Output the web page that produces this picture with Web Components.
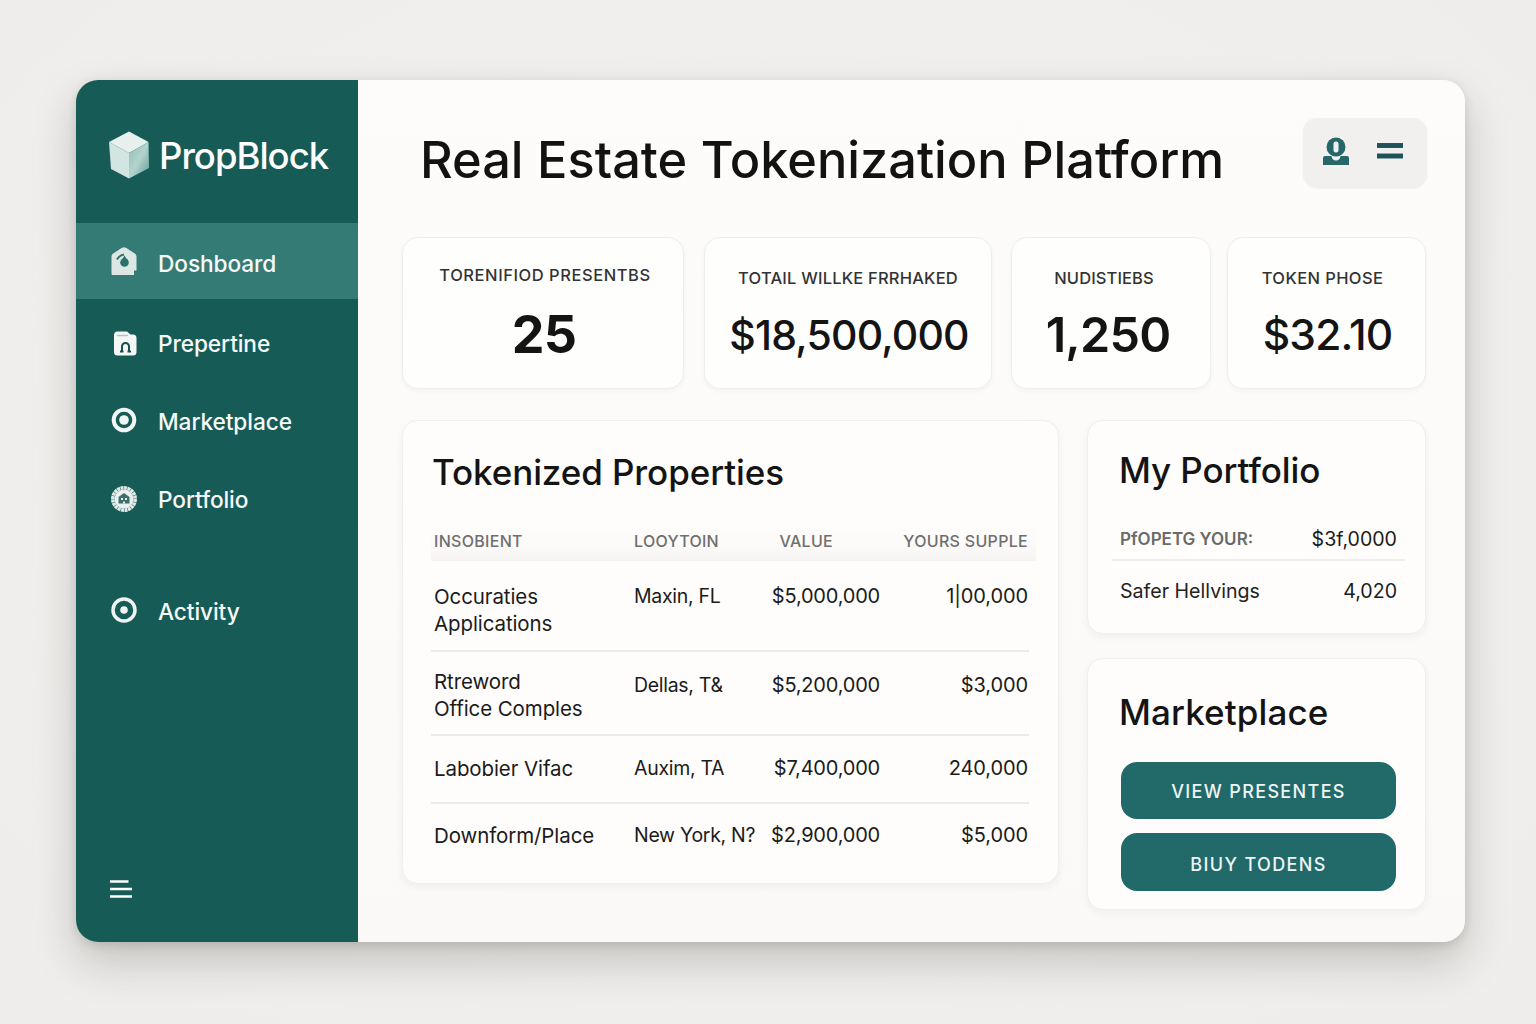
<!DOCTYPE html>
<html lang="en"><head><meta charset="utf-8"><title>PropBlock</title>
<style>
html,body{margin:0;height:100%}
body{background:radial-gradient(ellipse at 50% 45%,#f3f2f0 0%,#f0efed 60%,#eeedeb 100%);font-family:Inter,"Liberation Sans",sans-serif;color:#151515}
</style></head><body>
<app-window>
  <side-bar slot="side">
    <brand-logo>PropBlock</brand-logo>
    <nav-item active icon="dash" style="--mt:0">Doshboard</nav-item>
    <nav-item icon="prop" style="--mt:5px">Prepertine</nav-item>
    <nav-item icon="ring">Marketplace</nav-item>
    <nav-item icon="port">Portfolio</nav-item>
    <nav-item icon="ring2" style="--mt:34px">Activity</nav-item>
    <menu-glyph slot="foot"></menu-glyph>
  </side-bar>
  <top-bar>Real Estate Tokenization Platform</top-bar>
  <stat-row>
    <stat-card style="--w:282px;--vs:52px;--vw:700;--ly:-3px;--ls:.55px;--lx:2px;--vx:1px" value="25">TORENIFIOD PRESENTBS</stat-card>
    <stat-card style="--w:288px;--ml:20px;--vs:41px;--vw:500;--ls:.2px;--vx:1px" value="$18,500,000">TOTAIL WILLKE FRRHAKED</stat-card>
    <stat-card style="--w:200px;--ml:19px;--vs:48.500px;--vw:600;--lx:-7px;--vx:-3px" value="1,250">NUDISTIEBS</stat-card>
    <stat-card style="--w:199px;--ml:16px;--vs:42.500px;--vw:500;--lx:-4px;--ls:.4px;--vx:1px" value="$32.10">TOKEN PHOSE</stat-card>
  </stat-row>
  <lower-grid>
    <prop-table>
      <card-title slot="title" style="--t:29px;--l:29px;--tls:-.1px">Tokenized Properties</card-title>
      <prop-row slot="head" head><span>INSOBIENT</span><span>LOOYTOIN</span><span class="v">VALUE</span><span>YOURS SUPPLE</span></prop-row>
      <prop-row style="--h:91px;--p:22px;--o:0px"><span>Occuraties<br>Applications</span><span>Maxin, FL</span><span>$5,000,000</span><span>1|00,000</span></prop-row>
      <prop-row style="--h:84px;--p:16px;--o:4px"><span>Rtreword<br>Office Comples</span><span>Dellas, T&amp;</span><span>$5,200,000</span><span>$3,000</span></prop-row>
      <prop-row style="--h:68px;--p:19px;--o:0px"><span>Labobier Vifac</span><span>Auxim, TA</span><span>$7,400,000</span><span>240,000</span></prop-row>
      <prop-row last style="--h:65px;--p:18px;--o:0px"><span>Downform/Place</span><span>New York, N?</span><span>$2,900,000</span><span>$5,000</span></prop-row>
    </prop-table>
    <right-col>
      <info-card style="--h:214px">
        <card-title style="--t:27px;--l:31px;--tls:-.1px">My Portfolio</card-title>
        <kv-row style="--mt:27px;--h:42px" label-style="muted"><span slot="k">PfOPETG YOUR:</span>$3f,0000</kv-row>
        <kv-row last style="--mt:0;--h:60px"><span slot="k">Safer Hellvings</span>4,020</kv-row>
      </info-card>
      <info-card style="--h:252px">
        <card-title style="--t:31px;--l:31px;--tls:.1px">Marketplace</card-title>
        <teal-button style="--mt:28px;--bh:57px;--pt:2px">VIEW PRESENTES</teal-button>
        <teal-button style="--mt:14px;--bh:58px;--pt:4px">BIUY TODENS</teal-button>
      </info-card>
    </right-col>
  </lower-grid>
</app-window>
<script>
const def=(n,html)=>{customElements.define(n,class extends HTMLElement{
  constructor(){super();this.attachShadow({mode:'open'}).innerHTML=typeof html==='function'?html(this):html}
})};
const icons={
 dash:`<svg width="28" height="30" viewBox="0 0 28 30"><path d="M1.500 11 C1.500 9 2.500 8 4 7 L12 1.800 C13.300 1 14.700 1 16 1.800 L24 7 C25.500 8 26.500 9 26.500 11 V24.500 H24 V29 H3 C2 29 1.500 28.500 1.500 27.500 Z" fill="#dce7e4"/><path d="M7 13.500 C8.500 10.500 11 9 14 8.500" stroke="#2f6f6a" stroke-width="2" fill="none"/><circle cx="14.500" cy="16.500" r="4.300" fill="#2a716c"/><path d="M14.500 9.500l3 5h-6Z" fill="#2a716c"/></svg>`,
 prop:`<svg width="26" height="27" viewBox="0 0 26 27" style="margin-left:3px"><path d="M4.500 1.500H14l3.500 3H20A3.500 3.500 0 0 1 23.500 8V22A3.500 3.500 0 0 1 20 25.500H4.500A3.500 3.500 0 0 1 1 22V5A3.500 3.500 0 0 1 4.500 1.500Z" fill="#f4f7f6"/><path d="M4 5.500h11" stroke="#a9c6c1" stroke-width="1.400"/><path d="M9 21v-4.500a3.500 3.500 0 0 1 7 0V21" fill="none" stroke="#17514e" stroke-width="2"/><path d="M7 21.500h3.500M14.500 21.500h3.500" stroke="#17514e" stroke-width="1.800"/></svg>`,
 ring:`<svg width="26" height="26" viewBox="0 0 26 26" style="margin:-2px 0 0 1px"><circle cx="13" cy="13" r="10.300" fill="none" stroke="#f1f5f4" stroke-width="4"/><circle cx="13" cy="13" r="4.800" fill="#f1f5f4"/></svg>`,
 ring2:`<svg width="26" height="26" viewBox="0 0 26 26" style="margin:-2px 0 0 1px"><circle cx="13" cy="13" r="11" fill="none" stroke="#eef3f2" stroke-width="3.500"/><circle cx="13" cy="13" r="3.800" fill="#eef3f2"/></svg>`,
 port:`<svg width="28" height="28" viewBox="0 0 28 28"><circle cx="14" cy="14" r="11.200" fill="none" stroke="#dfe9e7" stroke-width="3.600" stroke-dasharray="3 .5"/><circle cx="14" cy="14" r="9.500" fill="#e9f0ee"/><path d="M8.500 12 14 8l5.500 4v6.500h-11Z" fill="#3c6f6b"/><path d="M11 13h2v2h-2ZM15 13h2v2h-2ZM13 16.500h2v2h-2Z" fill="#e9f0ee"/></svg>`
};
def('app-window',`<style>
:host{display:block;position:absolute;left:76px;top:80px;width:1389px;height:862px}
.w{display:flex;height:100%;border-radius:22px;overflow:hidden;background:#fbfaf8;box-shadow:0 20px 44px rgba(40,40,38,.22),0 3px 10px rgba(40,40,38,.14)}
.m{flex:1;min-width:0;padding:38px 38px 0 44px;box-sizing:border-box;background:linear-gradient(180deg,#fdfcfb 0%,#faf9f7 100%)}
</style><div class="w"><slot name="side"></slot><div class="m"><slot></slot></div></div>`);
def('side-bar',`<style>
:host{display:flex;flex-direction:column;width:282px;flex:none;height:100%;background:#175b57;color:#f4f8f7}
.foot{margin-top:auto;padding:0 0 44px 34px}
</style><slot></slot><div class="foot"><slot name="foot"></slot></div>`);
def('brand-logo',`<style>
:host{display:flex;align-items:center;height:143px;padding:9px 0 0 32px;box-sizing:border-box;gap:8px;font:500 36.500px Inter,sans-serif;letter-spacing:-1px;color:#fff}
svg{flex:none;margin-bottom:3px;margin-left:-1px}
</style><svg width="44" height="50" viewBox="0 0 44 50">
<defs><linearGradient id="g" x1="0" y1="0" x2="1" y2="1"><stop offset="0" stop-color="#8fbcb5"/><stop offset=".5" stop-color="#b4d3ce"/><stop offset="1" stop-color="#5f9a93"/></linearGradient></defs>
<path d="M22 1.500 41.500 12 22 23 2 12Z" fill="#e7f0ed"/>
<path d="M2 12 22 23V48.500L4 39Z" fill="#d3e5e1"/>
<path d="M22 23 41.500 12 42 38 22 48.500Z" fill="url(#g)"/>
</svg><slot></slot>`);
def('nav-item',el=>{const a=el.hasAttribute('active');return `<style>
:host{display:flex;align-items:center;box-sizing:border-box;height:${a?76:78}px;margin-top:var(--mt,0);padding:${a?'5px':'0'} 0 0 34px;${a?'background:#357b75;':''}font:500 22.700px Inter,sans-serif;letter-spacing:-.1px;color:#f6f9f8}
.i{width:48px;flex:none;display:flex;align-items:center;margin-top:${a?'-5px':'0'}}
</style><span class="i" part="i">${icons[el.getAttribute('icon')]}</span><slot></slot>`});
def('menu-glyph',`<style>:host{display:block;width:22px;height:18px}</style><svg width="22" height="18" viewBox="0 0 22 18"><path d="M0 1.500H18.500M0 9H22M0 16.500H22" stroke="#fff" stroke-width="2.400"/></svg>`);
def('top-bar',`<style>
:host{display:flex;align-items:center;height:70px;padding-left:18px;font:500 50.500px Inter,sans-serif;letter-spacing:0;color:#121212}
.t{flex:1;white-space:nowrap;position:relative;top:6px}
.a{flex:none;width:124px;height:70px;border-radius:14px;background:#f1f0ee;display:flex;align-items:center;justify-content:space-between;box-sizing:border-box;padding:0 24px 4px 19px;box-shadow:0 1px 2px rgba(0,0,0,.04)}
</style><div class="t"><slot></slot></div><div class="a">
<svg width="28" height="29" viewBox="0 0 28 29"><path d="M1 21a2 2 0 0 1 2-2h6.500a4.500 4.500 0 0 0 9 0H25a2 2 0 0 1 2 2v7H1Z" fill="#27676a"/><circle cx="14" cy="10" r="9.500" fill="#27676a"/><rect x="11.500" y="4.500" width="5" height="11" rx="2.200" fill="#f1f0ee"/></svg>
<svg width="26" height="16" viewBox="0 0 26 16"><path d="M0 2.500H26M0 13H26" stroke="#27606a" stroke-width="5"/><path d="M0 2.500H26M0 13H26" stroke="#1e5357" stroke-width="4"/></svg>
</div>`);
def('stat-row',`<style>:host{display:flex;margin-top:49px;height:152px}</style><slot></slot>`);
def('stat-card',el=>`<style>
:host{display:flex;flex-direction:column;align-items:center;box-sizing:border-box;width:var(--w);flex:none;margin-left:var(--ml,0);background:#fefefd;border:1px solid #efeeeb;border-radius:16px;box-shadow:0 2px 5px rgba(30,30,30,.04);text-align:center}
.l{margin-top:28px;height:24px;font:500 16.500px/24px Inter,sans-serif;letter-spacing:var(--ls,.1px);color:#333;white-space:nowrap;transform:translate(var(--lx,0),var(--ly,0))}
.v{margin-top:15px;font-size:var(--vs);font-weight:var(--vw);line-height:60px;letter-spacing:-.8px;color:#141414;white-space:nowrap;transform:translateX(var(--vx,0))}
</style><div class="l"><slot></slot></div><div class="v">${el.getAttribute('value')}</div>`);
def('lower-grid',`<style>:host{display:flex;gap:28px;margin-top:31px;align-items:flex-start}</style><slot></slot>`);
def('right-col',`<style>:host{display:flex;flex-direction:column;gap:24px;width:339px;flex:none}</style><slot></slot>`);
def('card-title',`<style>:host{display:block;height:44px;margin:var(--t) 0 0 var(--l);font:450 35px/44px Inter,sans-serif;letter-spacing:var(--tls,0);color:#141414;white-space:nowrap}</style><slot></slot>`);
def('prop-table',`<style>
:host{display:block;box-sizing:border-box;width:657px;height:464px;flex:none;background:#fefdfc;border:1px solid #f0efec;border-radius:16px;box-shadow:0 3px 8px rgba(30,30,30,.05)}
.h{margin:31px 22px 0 28px;height:36px;padding-top:3px;box-sizing:border-box;background:linear-gradient(180deg,#fefdfc 0%,#fbfaf9 60%,#f5f4f2 100%)}
.b{margin:0 29px 0 28px}
</style><slot name="title"></slot><div class="h"><slot name="head"></slot></div><div class="b"><slot></slot></div>`);
def('prop-row',el=>{const h=el.hasAttribute('head');return `<style>
:host{display:block;box-sizing:border-box;height:var(--h,auto);padding-top:var(--p,0);${h||el.hasAttribute('last')?'':'border-bottom:2px solid #ecebe8;'}}
.g{display:grid;grid-template-columns:200px 120px 126px 148px;padding:0 1px 0 3px;font:${h?'500 16px/26px':'400 20.500px/27px'} Inter,sans-serif;color:${h?'#6f6f6d':'#1b1b1b'};letter-spacing:${h?'.3px':'-.1px'}}
::slotted(span){white-space:nowrap}
::slotted(span:nth-child(2)){padding-top:var(--o,0);${h?'':'font-size:19.500px;letter-spacing:-.3px;'}}
::slotted(span:nth-child(3)){text-align:right;padding-top:var(--o,0);${h?'':'font-size:20px;letter-spacing:-.2px;'}}
::slotted(span:nth-child(4)){text-align:right;padding-top:var(--o,0);${h?'':'font-size:20px;'}}
::slotted(.v){padding-right:47px}
</style><div class="g"><slot></slot></div>`});
def('info-card',`<style>
:host{display:block;box-sizing:border-box;height:var(--h);background:#fefdfc;border:1px solid #f0efec;border-radius:16px;box-shadow:0 3px 8px rgba(30,30,30,.05)}
</style><slot></slot>`);
def('kv-row',el=>{const m=el.hasAttribute('label-style');return `<style>
:host{display:flex;justify-content:space-between;align-items:center;box-sizing:border-box;height:var(--h);margin:var(--mt) 20px 0 24px;padding:0 8px 0 8px;${el.hasAttribute('last')?'':'border-bottom:2px solid #f0efec;'}font:400 19.600px Inter,sans-serif;color:#1b1b1b}
.k{${m?'font-size:17px;font-weight:600;color:#6a6a68;':'color:#222;'}}
</style><span class="k"><slot name="k"></slot></span><span><slot></slot></span>`});
def('teal-button',`<style>
:host{display:block;margin:var(--mt) 0 0 33px;width:275px}
button{display:block;width:100%;height:var(--bh);border:0;border-radius:16px;background:#22696a;color:#eef5f4;font:500 18px Inter,sans-serif;letter-spacing:1.35px;padding:var(--pt,0) 0 0}
</style><button><slot></slot></button>`);
</script>
</body></html>
